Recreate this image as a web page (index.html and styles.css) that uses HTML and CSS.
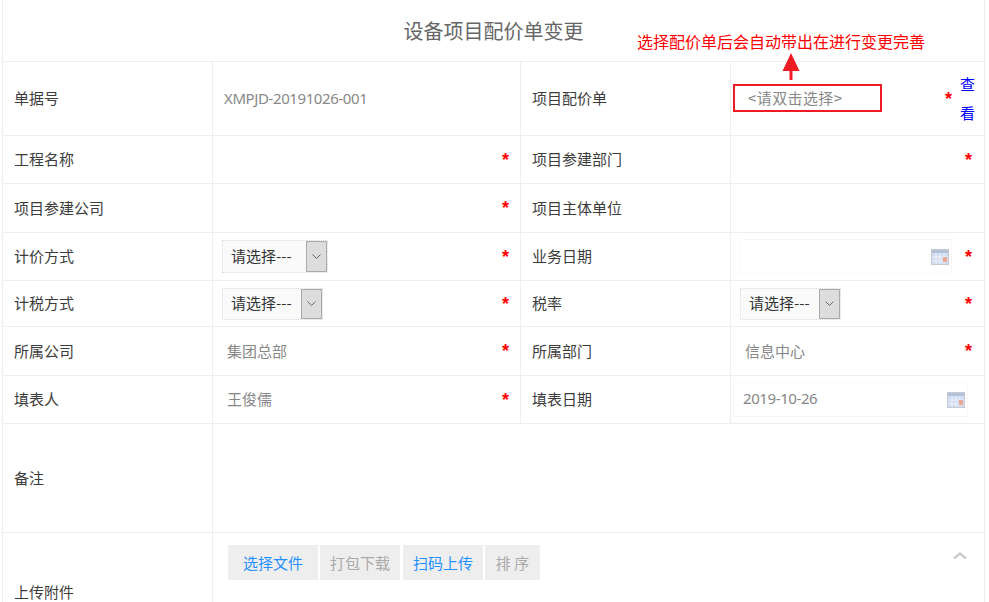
FILE: index.html
```html
<!DOCTYPE html>
<html lang="zh-CN">
<head>
<meta charset="utf-8">
<title>设备项目配价单变更</title>
<link rel="stylesheet" href="styles.css">
</head>
<body>
<div class="sheet">
  <table class="form">
    <colgroup><col class="c1"><col class="c2"><col class="c3"><col class="c4"></colgroup>
    <tr class="r-title"><td colspan="4" class="title">设备项目配价单变更</td></tr>
    <tr class="r-74">
      <td class="label">单据号</td>
      <td class="value">XMPJD-20191026-001</td>
      <td class="label">项目配价单</td>
      <td class="pick-cell">
        <div class="pick-row">
          <div class="pick">&lt;请双击选择&gt;</div>
          <span class="star star-pick">*</span>
          <a class="view">查看</a>
        </div>
      </td>
    </tr>
    <tr class="r-48">
      <td class="label">工程名称</td>
      <td><div class="field"><span class="star">*</span></div></td>
      <td class="label">项目参建部门</td>
      <td><div class="field"><span class="star">*</span></div></td>
    </tr>
    <tr class="r-49">
      <td class="label">项目参建公司</td>
      <td><div class="field"><span class="star">*</span></div></td>
      <td class="label">项目主体单位</td>
      <td></td>
    </tr>
    <tr class="r-48">
      <td class="label">计价方式</td>
      <td><div class="field"><div class="select s-105 tall"><span class="sel-text">请选择---</span><span class="sel-btn"><svg width="9" height="5" viewBox="0 0 9 5"><path d="M.5.5l4 4 4-4" fill="none" stroke="#666"/></svg></span></div><span class="star">*</span></div></td>
      <td class="label">业务日期</td>
      <td><div class="field"><div class="date d-212"><svg class="cal" width="18" height="16" viewBox="0 0 18 16"><rect x=".5" y=".5" width="17" height="15" fill="#cfdcf2" stroke="#c4c9d2"/><rect x="1" y="1" width="16" height="3" fill="#b4c2d8"/><path d="M5 4v11M9 4v11M13 4v11M1 8h16M1 12h16" stroke="#eef2fa"/><rect x="12" y="8" width="4" height="5" fill="#eba698"/></svg></div><span class="star">*</span></div></td>
    </tr>
    <tr class="r-46">
      <td class="label">计税方式</td>
      <td><div class="field"><div class="select s-100"><span class="sel-text">请选择---</span><span class="sel-btn"><svg width="9" height="5" viewBox="0 0 9 5"><path d="M.5.5l4 4 4-4" fill="none" stroke="#666"/></svg></span></div><span class="star">*</span></div></td>
      <td class="label">税率</td>
      <td><div class="field"><div class="select s-100"><span class="sel-text">请选择---</span><span class="sel-btn"><svg width="9" height="5" viewBox="0 0 9 5"><path d="M.5.5l4 4 4-4" fill="none" stroke="#666"/></svg></span></div><span class="star">*</span></div></td>
    </tr>
    <tr class="r-49">
      <td class="label">所属公司</td>
      <td><div class="field"><span class="plain">集团总部</span><span class="star">*</span></div></td>
      <td class="label">所属部门</td>
      <td><div class="field"><span class="plain">信息中心</span><span class="star">*</span></div></td>
    </tr>
    <tr class="r-48">
      <td class="label">填表人</td>
      <td><div class="field"><span class="plain">王俊儒</span><span class="star">*</span></div></td>
      <td class="label">填表日期</td>
      <td><div class="field wide"><div class="date d-235"><span class="date-text">2019-10-26</span><svg class="cal" width="18" height="16" viewBox="0 0 18 16"><rect x=".5" y=".5" width="17" height="15" fill="#cfdcf2" stroke="#c4c9d2"/><rect x="1" y="1" width="16" height="3" fill="#b4c2d8"/><path d="M5 4v11M9 4v11M13 4v11M1 8h16M1 12h16" stroke="#eef2fa"/><rect x="12" y="8" width="4" height="5" fill="#eba698"/></svg></div></div></td>
    </tr>
    <tr class="r-109">
      <td class="label">备注</td>
      <td colspan="3"></td>
    </tr>
    <tr class="r-120">
      <td class="label">上传附件</td>
      <td colspan="3" class="upload">
        <div class="upload-bar">
          <div class="btns">
            <span class="btn b-90 on">选择文件</span>
            <span class="btn b-80 gap-3">打包下载</span>
            <span class="btn b-80 on">扫码上传</span>
            <span class="btn b-55">排 序</span>
          </div>
          <svg class="chev" width="14" height="7" viewBox="0 0 14 7"><path d="M1 6.500l6-5 6 5" fill="none" stroke="#ccc" stroke-width="2.400"/></svg>
        </div>
      </td>
    </tr>
  </table>
  <div class="note">选择配价单后会自动带出在进行变更完善</div>
  <svg class="arrow" width="18" height="28" viewBox="0 0 18 28"><path d="M9 0l8.500 18H10.500v9h-3v-9H.5z" fill="#ed1c24"/></svg>
</div>
</body>
</html>
```
FILE: styles.css
```css
* { box-sizing: border-box; }
html, body { margin: 0; padding: 0; background: #fff; }
body {
  height: 602px;
  overflow: hidden;
  font-family: "Noto Sans CJK SC", "Noto Sans", sans-serif;
  font-size: 15px;
  color: #3c3c3c;
}
.sheet { position: relative; padding-left: 2px; }
.form {
  table-layout: fixed;
  width: 983px;
  border-collapse: separate;
  border-spacing: 0;
}
.c1 { width: 211px; }
.c2 { width: 308px; }
.c3 { width: 210px; }
.c4 { width: 254px; }
.form td {
  padding: 0;
  border-right: 1px solid #eee;
  border-bottom: 1px solid #eee;
  vertical-align: middle;
}
.form td:first-child { border-left: 1px solid #eee; }
.r-title { height: 62px; }
.r-74 { height: 74px; }
.r-48 { height: 48px; }
.r-49 { height: 49px; }
.r-46 { height: 46px; }
.r-109 { height: 109px; }
.r-120 { height: 120px; }
.form td.title {
  text-align: center;
  font-size: 20px;
  color: #666;
  padding-bottom: 1px;
}
.form td.label { padding: 0 0 2px 11px; }
.form td.value {
  padding: 0 0 1px 11px;
  color: #888;
  font-family: "Noto Sans", sans-serif;
  letter-spacing: -0.4px;
}
.field {
  display: flex;
  align-items: center;
  justify-content: space-between;
  padding: 0 11px 0 9px;
}
td:last-child .field { padding-right: 12px; }
.plain { color: #888; padding: 0 0 2px 5px; }
.star {
  margin-left: auto;
  font: bold 18px/18px "Liberation Sans", sans-serif;
  color: #f00;
  height: 18px;
}
.select {
  display: flex;
  justify-content: space-between;
  height: 32px;
  border: 1px dotted #ddd;
  background: #fafafa;
  color: #333;
}
.select.tall { height: 33px; }
.s-105 { width: 106px; flex: none; }
.s-100 { width: 101px; flex: none; }
.sel-text { padding: 0 0 2px 8px; align-self: center; }
.sel-btn {
  width: 21px;
  background: #ddd;
  border: 1px solid #aaa;
  display: flex;
  align-items: center;
  justify-content: center;
}
.date {
  display: flex;
  align-items: center;
  justify-content: flex-end;
  height: 35px;
  border: 1px solid #f8f8f8;
  padding-right: 2px;
}
.d-212 { width: 212px; flex: none; }
.d-235 { width: 235px; flex: none; margin-left: -7px; justify-content: space-between; padding-left: 9px; }
td:last-child .field.wide { padding-right: 17px; }
.date-text { color: #888; font-family: "Noto Sans", sans-serif; letter-spacing: -0.4px; padding-bottom: 3px; }
.cal { display: block; }
.pick-row {
  display: flex;
  align-items: center;
  padding-left: 2px;
}
.pick {
  width: 149px;
  height: 28px;
  border: 2px solid #ed1c24;
  color: #888;
  padding-left: 13px;
  line-height: 24px;
  margin-top: -1px;
  letter-spacing: 0.4px;
}
.star-pick { margin-left: 63px; }
.view {
  width: 16px;
  margin: -2px 7px 0 8px;
  font-size: 15px;
  line-height: 29px;
  color: #00f;
}
.upload { vertical-align: top !important; }
.upload-bar {
  display: flex;
  justify-content: space-between;
  padding: 12px 17px 0 15px;
}
.btns { display: flex; }
.btn {
  height: 35px;
  line-height: 35px;
  background: #eee;
  color: #aaa;
  text-align: center;
  margin-right: 2px;
}
.btn.on { color: #1e90ff; }
.b-90 { width: 90px; }
.b-80 { width: 80px; }
.gap-3 { margin-right: 3px; }
.b-55 { width: 55px; }
.chev { margin-top: 7px; }
.note {
  position: absolute;
  left: 637px;
  top: 29px;
  font-size: 16px;
  line-height: 24px;
  color: #f00;
  white-space: nowrap;
}
.arrow { position: absolute; left: 782px; top: 53px; }
```
